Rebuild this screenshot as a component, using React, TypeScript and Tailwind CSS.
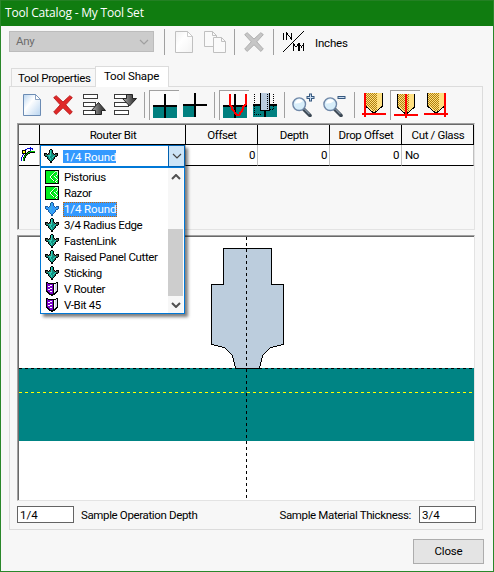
import React from "react";

const OUTLINE: Record<string, string> = {
  k: "#000000",
  t: "#109080",
  c: "#30d0b8",
  w: "#ffffff",
  g: "#00f020",
  l: "#c8ffc8",
  p: "#7a00c8",
  s: "#d8d8e8",
  b: "#3399ff",
  d: "#1c5c9c",
  e: "#38b0e0",
  y: "#ffff00",
  n: "#0000d0",
  z: "#40584c",
  h: "#00c000",
};

function Pixels({ rows, className = "" }: { rows: string[]; className?: string }) {
  const w = rows[0].length;
  return (
    <svg width={w} height={rows.length} viewBox={`0 0 ${w} ${rows.length}`} shapeRendering="crispEdges" className={`shrink-0 ${className}`}>
      {rows.flatMap((row, y) =>
        row.split("").map((ch, x) => (ch === "." ? null : <rect key={`${x}-${y}`} x={x} y={y} width="1" height="1" fill={OUTLINE[ch]} />)),
      )}
    </svg>
  );
}

const cutter = [
  "......kk......",
  ".....kctk.....",
  ".....kctk.....",
  ".....kctk.....",
  "kkk.kzctzk.kkk",
  "kzzkzzcttzkzzk",
  "kzttccctttczzk",
  ".kkttctttctkk.",
  "...ktcttctk...",
  "...kttcttzk...",
  "....ktcttk....",
  ".....kttk.....",
  "......kk......",
  "......kk......",
];
const cutterSelected = cutter.map((r) => r.replace(/k/g, "d").replace(/t/g, "b").replace(/c/g, "e").replace(/z/g, "b"));
const blade = [
  "kkkkkkkkkkkkkk",
  "kggggggggglllk",
  "kgggggggglgglk",
  "kggggggglhgglk",
  "kggggggwhggglk",
  "kgggggwhgggwgk",
  "kggggwhggwgggk",
  "kggggwhgggwggk",
  "kgggggwhgggwgk",
  "kggggggwhgggwk",
  "kgggggghwhgwgk",
  "kgggggggghwggk",
  "kggggggggghwgk",
  "kkkkkkkkkkkkkk",
];
const vbit = [
  "kk........kk",
  "kpkkkkkkkksk",
  "kppppppkwssk",
  "kpppwwpkwssk",
  "kpwwpppkwssk",
  "kppppppkwssk",
  "kpppwwpkwssk",
  "kpwwpppkwssk",
  "kppppppkwssk",
  "kkppwwpkwskk",
  ".kkppppkskk.",
  "..kkpppkkk..",
  "...kkkkkk...",
  ".....kk.....",
];
const profile = [
  ".........n.....",
  "......nnnnnn...",
  "....nn...n.n...",
  ".kkkk....n.....",
  ".kyyk..kkhhhhh.",
  ".kyyk.khhkkkkk.",
  ".kkkkkhkk......",
  "..n.khk........",
  ".n.khk.........",
  ".n.hk..........",
  "n.khk..........",
  "n.hk...........",
  "n.hk...........",
  "n.hk...........",
];

function Sep({ className }: { className: string }) {
  return <span className={`h-[26px] w-px shrink-0 bg-[#a0a0a0] ${className}`} />;
}

function Page({ fill, stroke, className }: { fill: string; stroke: string; className: string }) {
  return (
    <svg width="18" height="22" viewBox="0 0 18 22" className={`shrink-0 ${className}`}>
      <defs>
        <linearGradient id={`page${stroke.slice(1)}`} x1="0" y1="0" x2="1" y2="1">
          <stop offset="0" stopColor={fill} />
          <stop offset="0.4" stopColor="#ffffff" />
          <stop offset="1" stopColor={fill} />
        </linearGradient>
      </defs>
      <path d="M.5 .5h12l5 5v16H.5z" fill={`url(#page${stroke.slice(1)})`} stroke={stroke} />
      <path d="M12.5 .5v5h5z" fill="#fff" stroke={stroke} strokeWidth=".8" />
    </svg>
  );
}

function Cross({ fill, stroke, className }: { fill: string; stroke: string; className: string }) {
  return (
    <svg width="20" height="20" viewBox="0 0 20 20" className={`shrink-0 ${className}`}>
      <path
        d="M3.2 .7 L10 7 L16.8 .7 L19.3 2.6 L12.8 9.8 L19.3 17 L16.8 19.4 L10 12.8 L3.2 19.4 L.7 17 L7.2 9.8 L.7 2.6Z"
        fill={fill}
        stroke={stroke}
        strokeWidth=".9"
      />
    </svg>
  );
}

function MoveIcon({ down, className }: { down?: boolean; className: string }) {
  const bars = down
    ? [[0, 0, 14], [0, 8, 14], [0, 16, 14]]
    : [[0, 0, 14], [0, 8, 12], [0, 16, 14]];
  return (
    <svg width="23" height="22" viewBox="0 0 23 22" className={`shrink-0 ${className}`}>
      <defs>
        <linearGradient id="arrow" x1="0" y1="0" x2="1" y2="0">
          <stop offset="0" stopColor="#b0b0b0" />
          <stop offset="0.7" stopColor="#484848" />
          <stop offset="1" stopColor="#333" />
        </linearGradient>
      </defs>
      {bars.map(([x, y, w]) => (
        <rect key={y} x={x + 0.5} y={y + 0.5} width={w} height="4" fill="#fff" stroke="#3c3c3c" />
      ))}
      {down ? (
        <path d="M12.5 .5h6v4h4l-7 7.5-7-7.5h4z" fill="url(#arrow)" stroke="#222" />
      ) : (
        <path d="M12.5 20.5h6v-4h4l-7-8-7 8h4z" fill="url(#arrow)" stroke="#222" />
      )}
    </svg>
  );
}

function Crosshair({ partial, children }: { partial?: boolean; children?: React.ReactNode }) {
  return (
    <svg width="24" height="24" viewBox="0 0 24 24" shapeRendering="crispEdges" className="shrink-0">
      <rect x="0" y="12" width={partial ? 12 : 24} height="12" fill="#008080" />
      <path d="M0 11h24v2H0zM11 0h2v24h-2z" fill="#000" />
      {children}
    </svg>
  );
}

function Pressed({ children, className }: { children: React.ReactNode; className: string }) {
  return (
    <span className={`flex h-[30px] w-[30px] shrink-0 border-l border-t border-[#a0a0a0] bg-[#fbfbfb] pl-[3px] pt-[3px] ${className}`}>
      {children}
    </span>
  );
}

function Lens({ plus, className }: { plus?: boolean; className: string }) {
  return (
    <svg width="23" height="24" viewBox="0 0 23 24" className={`shrink-0 ${className}`}>
      <path d="M12 16.500l6 6" stroke="#3c4854" strokeWidth="3.6" strokeLinecap="round" />
      <path d="M12.5 16.2l5 5" stroke="#8898a8" strokeWidth="1.2" />
      <circle cx="7.2" cy="11.2" r="6.3" fill="#d8eefa" stroke="#7088a8" strokeWidth="1.4" />
      <path d="M3 10.5a4.5 4.5 0 0 1 8-2.6q-3 3-8 2.6z" fill="#fff" />
      <path d={plus ? "M14.5 4.5h8M18.5 .5v8" : "M14.5 4.5h8"} stroke="#36587f" strokeWidth="3" />
      <path d={plus ? "M15.5 4.5h6M18.5 1.5v6" : "M15.5 4.5h6"} stroke="#c9dcf0" strokeWidth="1" />
    </svg>
  );
}

function Tip({ at }: { at: number }) {
  const dots: string[] = [];
  for (let y = 0; y < 18; y++) {
    for (let x = 4; x < 15; x++) {
      const inside = y < 13 || x > 4 + (y - 12) * 1.2;
      if (inside && (x + y) % 2 === 0) dots.push(`M${x} ${y}h1v1h-1z`);
    }
  }
  return (
    <svg width="24" height="24" viewBox="0 0 24 24" shapeRendering="crispEdges" className="shrink-0">
      <path d="M4 0h16v13l-7 7h-2l-7-7z" fill="#ffe080" />
      <path d={dots.join("")} fill="#b08010" />
      <path d="M3 0h1v13h-1zM20 0h1v13h-1z" fill="#000" />
      <path d="M3.500 13l8 7h1l8-7" fill="none" stroke="#000" />
      <path d={`M0 20h24v2H0zM${at} 0h2v24h-2z`} fill="#f00" />
    </svg>
  );
}

const items: { icon: string[]; label: string; selected?: boolean }[] = [
  { icon: blade, label: "Pistorius" },
  { icon: blade, label: "Razor" },
  { icon: cutterSelected, label: "1/4 Round", selected: true },
  { icon: cutter, label: "3/4 Radius Edge" },
  { icon: cutter, label: "FastenLink" },
  { icon: cutter, label: "Raised Panel Cutter" },
  { icon: cutter, label: "Sticking" },
  { icon: vbit, label: "V Router" },
  { icon: vbit, label: "V-Bit 45" },
];

function Chevron({ up, color, bold }: { up?: boolean; color: string; bold?: boolean }) {
  return (
    <svg width="10" height="6" viewBox="0 0 10 6">
      <path d={up ? "M1 5l4-4 4 4" : "M1 1l4 4 4-4"} fill="none" stroke={color} strokeWidth={bold ? 2 : 1.2} />
    </svg>
  );
}

function BitPicker() {
  return (
    <div className="absolute left-[22px] top-[21px] z-20 w-[145px] shadow-[3px_3px_3px_rgba(0,0,0,0.5)]">
      <div className="flex h-[22px] border border-[#0078d7] bg-white">
        <Pixels rows={cutter} className="ml-[3px] mt-[3px]" />
        <span className="ml-[5px] mt-[4px] h-[13px] w-[53px] whitespace-nowrap bg-[#3399ff] pl-px leading-[14px] tracking-[-0.1px] text-white">1/4 Round</span>
        <span className="-my-px -mr-px ml-auto flex w-[17px] items-center justify-center border border-[#0060b0] bg-[#cce4f7]">
          <Chevron color="#444" />
        </span>
      </div>
      <div className="flex h-[147px] border border-[#0078d7] bg-white">
        <ul className="flex-1 pt-[2px]">
          {items.map((it) => (
            <li key={it.label} className="flex h-[16px] items-start pl-[4px]">
              <span className="flex w-[14px] shrink-0"><Pixels rows={it.icon} className={it.icon === vbit ? "ml-px" : ""} /></span>
              <span
                className={`h-[15px] whitespace-nowrap leading-[15px] ${
                  it.selected
                    ? "ml-[4px] w-[54px] bg-[#3399ff] pl-px tracking-[-0.1px] text-white outline-dotted outline-1 -outline-offset-1 outline-[#cc6600]"
                    : "ml-[5px]"
                }`}
              >
                {it.label}
              </span>
            </li>
          ))}
        </ul>
        <div className="mr-px flex w-[15px] flex-col items-center bg-[#f7f7f7]">
          <span className="mt-[6px] flex h-[8px]"><Chevron up bold color="#505050" /></span>
          <span className="mt-[47px] h-[67px] w-full bg-[#cdcdcd]" />
          <span className="mt-[6px]"><Chevron bold color="#505050" /></span>
        </div>
      </div>
    </div>
  );
}

function Head({ children, className }: { children?: React.ReactNode; className: string }) {
  return (
    <div className={`h-[20px] shrink-0 whitespace-nowrap border-b border-r border-black pl-px text-center leading-[21px] ${className}`}>
      {children}
    </div>
  );
}

function Cell({ children, className }: { children?: React.ReactNode; className: string }) {
  return (
    <div className={`h-[21px] shrink-0 border-b border-r border-b-black border-r-[#c0c0c0] bg-white leading-[21px] ${className}`}>
      {children}
    </div>
  );
}

export default function App() {
  return (
    <div className="flex h-[572px] w-[494px] flex-col overflow-hidden border-x border-b border-[#2a872a] bg-[#f7f7f7] font-[Roboto,'Liberation_Sans',sans-serif] text-[11.5px] tracking-[-0.36px] text-black">
      <header className="-mx-px h-[26px] shrink-0 whitespace-nowrap border-t border-[#238023] bg-[#107c10] pl-[5px] font-['Open_Sans','Noto_Sans',sans-serif] text-[12px] leading-[24px] tracking-[-0.2px] text-white">
        Tool Catalog - My Tool Set
      </header>

      <div className="flex h-[40px] shrink-0 items-start pl-[8px]">
        <div className="mt-[5px] flex h-[21px] w-[145px] shrink-0 items-center justify-between border border-[#bcbcbc] bg-[#cccccc] pl-[6px] pr-[4px] text-[#6d6d6d]">
          <span>Any</span>
          <Chevron color="#a0a0a0" />
        </div>
        <Sep className="ml-[10px] mt-[3px]" />
        <Page fill="#f2f2f2" stroke="#c0c0c0" className="ml-[10px] mt-[5px]" />
        <svg width="22" height="22" viewBox="0 0 22 22" className="ml-[11px] mt-[5px] shrink-0">
          <path d="M.5 .5h8l4 4v11H.5z" fill="#fafafa" stroke="#c0c0c0" />
          <path d="M8.5 .5v4h4" fill="none" stroke="#c0c0c0" />
          <path d="M9.5 6.500h8l4 4v11h-12z" fill="#fafafa" stroke="#c0c0c0" />
          <path d="M17.500 6.500v4h4" fill="none" stroke="#c0c0c0" />
        </svg>
        <Sep className="ml-[8px] mt-[3px]" />
        <Cross fill="#c6c6c6" stroke="#acacac" className="ml-[9px] mt-[6px]" />
        <Sep className="ml-[9px] mt-[3px]" />
        <svg width="23" height="22" viewBox="0 0 23 22" shapeRendering="crispEdges" className="ml-[8px] mt-[5px] shrink-0">
          <path d="M.5 21.500L22 0" fill="none" stroke="#000" />
          <path d="M1.500 2v7M4.500 9V2l5 6M9.500 2v7" fill="none" stroke="#000" />
          <path d="M11.500 20v-7l2.500 3 2.500-3v7M17.500 20v-7l2 3 2-3v7" fill="none" stroke="#000" />
        </svg>
        <span className="ml-[10px] mt-[9px] leading-[16px] tracking-[-0.2px]">Inches</span>
      </div>

      <div className="flex h-[20px] shrink-0 items-end pl-[10px]">
        <div className="h-[18px] w-[84px] whitespace-nowrap border-l border-t border-[#dcdcdc] pl-[6px] leading-[18px]">Tool Properties</div>
        <div className="relative z-10 -mb-px h-[21px] w-[74px] whitespace-nowrap border-x border-t border-[#dcdcdc] bg-white pl-[8px] leading-[19px] tracking-[-0.2px]">
          Tool Shape
        </div>
      </div>

      <main className="ml-[8px] flex h-[444px] w-[474px] shrink-0 flex-col border border-[#dcdcdc]">
        <div className="flex h-[36px] shrink-0 items-start">
          <Page fill="#b8d4f0" stroke="#6c8cb4" className="ml-[13px] mt-[7px]" />
          <Cross fill="#e02828" stroke="#b81c1c" className="ml-[12px] mt-[8px]" />
          <MoveIcon className="ml-[10px] mt-[7px]" />
          <MoveIcon down className="ml-[8px] mt-[7px]" />
          <Sep className="ml-[7px] mt-[5px]" />
          <Pressed className="ml-[4px] mt-[3px]"><Crosshair /></Pressed>
          <span className="ml-[4px] mt-[6px]"><Crosshair partial /></span>
          <Sep className="ml-[7px] mt-[5px]" />
          <Pressed className="ml-[4px] mt-[3px]">
            <Crosshair>
              <path d="M7 0v11l2 2v2l5 6h2l4-6v-2l3-3V0" fill="none" stroke="#f00" strokeWidth="2" />
            </Crosshair>
          </Pressed>
          <span className="ml-[4px] mt-[6px]">
            <Crosshair>
              <path d="M7.500 0v17.500h9V0" fill="#b9cbde" stroke="#000" />
              <path d="M1.500 1v20.500H8M20.500 1v15H17M14.500 1v16" fill="none" stroke="#000" strokeDasharray="1 1" />
            </Crosshair>
          </span>
          <Sep className="ml-[7px] mt-[5px]" />
          <Lens plus className="ml-[7px] mt-[6px]" />
          <Lens className="ml-[8px] mt-[6px]" />
          <Sep className="ml-[8px] mt-[5px]" />
          <span className="ml-[7px] mt-[6px]"><Tip at={2} /></span>
          <Pressed className="ml-[4px] mt-[3px]"><Tip at={11} /></Pressed>
          <span className="ml-[4px] mt-[6px]"><Tip at={20} /></span>
        </div>

        <section className="relative ml-[7px] h-[107px] w-[458px] shrink-0 border border-b-[#e3e3e3] border-l-[#a0a0a0] border-r-[#e3e3e3] border-t-[#a0a0a0]">
          <div className="h-full border-l border-t border-[#696969]">
            <div className="flex">
              <Head className="w-[21px]" />
              <Head className="w-[146px]">Router Bit</Head>
              <Head className="w-[72px]">Offset</Head>
              <Head className="w-[72px]">Depth</Head>
              <Head className="w-[72px]">Drop Offset</Head>
              <Head className="w-[72px]">Cut / Glass</Head>
            </div>
            <div className="flex">
              <Cell className="w-[21px] pl-[2px] pt-[2px]"><Pixels rows={profile} /></Cell>
              <Cell className="w-[146px]" />
              <Cell className="w-[72px] pr-[2px] text-right">0</Cell>
              <Cell className="w-[72px] pr-[2px] text-right">0</Cell>
              <Cell className="w-[72px] pr-[2px] text-right">0</Cell>
              <Cell className="w-[72px] pl-[3px]">No</Cell>
            </div>
          </div>
          <BitPicker />
        </section>

        <section className="ml-[7px] mt-[5px] h-[266px] w-[458px] shrink-0 border border-b-[#e3e3e3] border-l-[#a0a0a0] border-r-[#e3e3e3] border-t-[#a0a0a0]">
          <div className="h-full border-l border-t border-[#696969] bg-white">
            <svg width="455" height="263" viewBox="19 237 455 263" className="block" shapeRendering="crispEdges">
              <rect x="19" y="368" width="455" height="73" fill="#008484" />
              <path
                d="M223.500 248.500H271.500V284.500H283.500V344.500L270.500 347.500L262.500 355.500L259.500 368.500H235.500L232.500 355.500L224.500 347.500L211.500 344.500V284.500H223.500Z"
                fill="#bccddd"
                stroke="#000"
              />
              <path d="M19 368.500H474" stroke="#000" strokeDasharray="3 3" />
              <path d="M19 392.500H474" stroke="#ff0" strokeDasharray="3 3" />
              <path d="M246.500 237V498" stroke="#000" strokeDasharray="3 3" />
            </svg>
          </div>
        </section>

        <div className="ml-[7px] mt-[5px] flex h-[17px] w-[459px] shrink-0 items-center leading-[16px]">
          <div className="h-[17px] w-[57px] border border-[#646464] bg-white pl-[2px] tracking-normal">1/4</div>
          <span className="ml-[7px] whitespace-nowrap">Sample Operation Depth</span>
          <span className="ml-auto mr-[8px] whitespace-nowrap">Sample Material Thickness:</span>
          <div className="h-[17px] w-[57px] border border-[#646464] bg-white pl-[2px] tracking-normal">3/4</div>
        </div>
      </main>

      <footer className="mr-[9px] mt-[9px] flex shrink-0 justify-end">
        <button className="h-[25px] w-[71px] border border-[#adadad] bg-[#e4e4e4] tracking-[-0.2px]">Close</button>
      </footer>
    </div>
  );
}
